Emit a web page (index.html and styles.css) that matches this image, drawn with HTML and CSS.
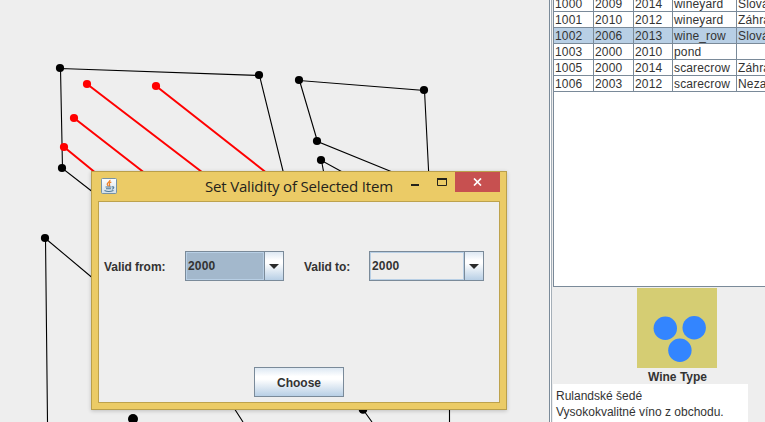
FILE: index.html
```html
<!DOCTYPE html>
<html lang="en">
<head>
<meta charset="utf-8">
<title>Set Validity of Selected Item</title>
<link rel="stylesheet" href="styles.css">
</head>
<body>
<div class="app">
  <main class="map">
    <svg width="549" height="422" viewBox="0 0 549 422">
      <g class="outline">
        <path d="M91.500 191L62.500 168.500L60.500 68.500L259.500 75.500L284 175"/>
        <path d="M396 173.500L317.500 141.500L299.500 80.500L424.500 90.500L428.800 175"/>
        <path d="M324 174L321.500 160.500L346 174"/>
        <path d="M95 280L45.500 238.500L47.500 422"/>
        <path d="M234 408L243 422M363 409.500L372 422M449.500 405V422"/>
      </g>
      <g class="rows">
        <path d="M87 84L204.500 174M156 86L268 174M74 118L146 174M64 147L97 174"/>
      </g>
      <g class="nodes">
        <circle cx="60" cy="68" r="4.100"/><circle cx="259" cy="75" r="4.100"/><circle cx="62" cy="168" r="4.100"/>
        <circle cx="299" cy="80" r="4.100"/><circle cx="424" cy="90" r="4.100"/><circle cx="317" cy="141" r="4.100"/>
        <circle cx="321" cy="160" r="4.100"/><circle cx="45" cy="238" r="4.100"/>
        <circle cx="133" cy="419" r="5"/><circle cx="363" cy="409.500" r="4.300"/>
      </g>
      <g class="selected">
        <circle cx="87" cy="84" r="4.100"/><circle cx="156" cy="86" r="4.100"/><circle cx="74" cy="118" r="4.100"/><circle cx="64" cy="147" r="4.100"/>
      </g>
    </svg>
  </main>
  <aside class="side">
    <div class="list">
      <table class="items">
        <tr><td>1000</td><td>2009</td><td>2014</td><td>wineyard</td><td>Slová</td></tr>
        <tr><td>1001</td><td>2010</td><td>2012</td><td>wineyard</td><td>Záhra</td></tr>
        <tr class="current"><td>1002</td><td>2006</td><td>2013</td><td>wine_row</td><td>Slová</td></tr>
        <tr><td>1003</td><td>2000</td><td>2010</td><td>pond</td><td></td></tr>
        <tr><td>1005</td><td>2000</td><td>2014</td><td>scarecrow</td><td>Záhra</td></tr>
        <tr><td>1006</td><td>2003</td><td>2012</td><td>scarecrow</td><td>Neza</td></tr>
      </table>
    </div>
    <div class="detail">
      <svg class="wine" width="80" height="80" viewBox="0 0 80 80">
        <rect width="80" height="80" fill="#d5cd73"/>
        <g fill="#3385ff"><circle cx="28.300" cy="40.200" r="11.700"/><circle cx="57.200" cy="39.700" r="11.700"/><circle cx="42.900" cy="62.300" r="11.700"/></g>
      </svg>
      <div class="caption">Wine Type</div>
      <div class="note">Rulandské šedé<br>Vysokokvalitné víno z obchodu.</div>
    </div>
  </aside>
</div>

<section class="dialog">
  <header class="titlebar">
    <svg class="java" width="16" height="16" viewBox="0 0 16 16">
      <defs><linearGradient id="tile" x2="0" y2="1"><stop stop-color="#fff"/><stop offset="1" stop-color="#d2dfe8"/></linearGradient></defs>
      <rect x=".5" y=".5" width="15" height="15" rx="1" fill="url(#tile)" stroke="#7792a5"/>
      <path d="M9 1.800C9.500 4 5.700 4.300 6.200 6.300Q6.400 7.200 7.500 8.200M10.300 4.200Q7.500 5 8.400 6.500Q9.200 7.400 8 8.300" fill="none" stroke="#ed7d22" stroke-width="1.200"/>
      <path d="M4.500 9H10.500M5 10.700H10M11 9Q13.500 8.500 12.500 10.200Q12 11 10.800 11.300M3.500 12.500Q7.500 14.500 12.500 12.500" fill="none" stroke="#4d7795" stroke-width="1.100"/>
    </svg>
    <h1>Set Validity of Selected Item</h1>
    <div class="controls">
      <span class="ctl min"><svg width="8" height="2"><rect width="8" height="2" fill="#25231b"/></svg></span>
      <span class="ctl max"><svg width="10" height="8" viewBox="0 0 10 8"><path d="M.5 1V7.500H9.500V1" fill="none" stroke="#25231b"/><path d="M0 1H10" stroke="#25231b" stroke-width="2"/></svg></span>
      <span class="close"><svg width="9" height="8" viewBox="0 0 9 8"><path d="M1 .5L8 7.500M8 .5L1 7.500" stroke="#fff" stroke-width="1.700"/></svg></span>
    </div>
  </header>
  <div class="body">
    <div class="form">
      <span class="label">Valid from:</span>
      <div class="combo focused"><span class="value">2000</span><span class="arrow"><svg width="10" height="5"><path d="M0 0H10L5 5Z" fill="#2b2b2b"/></svg></span></div>
      <span class="label to">Valid to:</span>
      <div class="combo second"><span class="value">2000</span><span class="arrow"><svg width="10" height="5"><path d="M0 0H10L5 5Z" fill="#2b2b2b"/></svg></span></div>
    </div>
    <button class="choose">Choose</button>
  </div>
</section>
</body>
</html>
```
FILE: styles.css
```css
* { box-sizing: border-box; }
body {
  margin: 0;
  width: 765px;
  height: 422px;
  overflow: hidden;
  background: #eee;
  color: #333;
  font: 12px/16px "Liberation Sans", Arial, sans-serif;
}
svg { display: block; }
.app { display: flex; width: 765px; height: 422px; }
.map { width: 549px; flex: none; overflow: hidden; }
.outline { fill: none; stroke: #000; stroke-width: 1.1; }
.rows { stroke: #f00; stroke-width: 2; }
.selected { fill: #f00; }

.side {
  width: 216px;
  height: 422px;
  overflow: hidden;
  border-left: 1px solid #7a8a99;
  box-shadow: inset 1px 0 #fff, inset 2px 0 #a5afb8;
  padding-left: 3px;
}
.list {
  height: 287px;
  overflow: hidden;
  background: #fff;
  border-left: 1px solid #7a8a99;
  border-bottom: 1px solid #7a8a99;
}
.items {
  width: 240px;
  margin-top: -4px;
  table-layout: fixed;
  border-collapse: separate;
  border-spacing: 0;
}
.items td {
  width: 40px;
  height: 16px;
  padding: 1px 0 0 1px;
  line-height: 14px;
  border-right: 1px solid #7a8a99;
  border-bottom: 1px solid #7a8a99;
  white-space: nowrap;
  letter-spacing: .15px;
}
.items td:nth-child(3) { width: 39px; }
.items td:nth-child(4) { width: 64px; }
.items td:nth-child(5) { width: 57px; }
.current { background: #b8cfe5; }

.detail { padding-top: 1px; }
.wine { margin-left: 84px; }
.caption {
  width: 249px;
  height: 16px;
  line-height: 18px;
  text-align: center;
  font-weight: bold;
}
.note {
  width: 195px;
  height: 38px;
  padding: 4px 3px;
  background: #fff;
  white-space: nowrap;
}

.dialog {
  position: absolute;
  left: 91px;
  top: 171px;
  width: 416px;
  height: 239px;
  padding: 0 6px 6px;
  background: #ebcb66;
  border: 1px solid #b99f4b;
  box-shadow: 0 1px 4px rgba(0, 0, 0, .2);
}
.titlebar { display: flex; height: 29px; }
.java { margin: 6px 0 0 3px; flex: none; }
h1 {
  width: 190px;
  margin: 0 0 0 88px;
  font: 15px/29px "Open Sans", sans-serif;
  letter-spacing: -.18px;
  color: #25231b;
  white-space: nowrap;
}
.controls { display: flex; margin-left: auto; height: 20px; }
.ctl { width: 27px; }
.min { padding: 12px 0 0 10px; }
.max { padding: 6px 0 0 9px; }
.close {
  display: flex;
  width: 45px;
  align-items: center;
  justify-content: center;
  background: #c75050;
}
.body {
  height: 202px;
  border: 1px solid #bda24d;
  padding: 49px 5px 0;
  background: #eee;
}
.form { display: flex; align-items: center; height: 30px; font-weight: bold; }
.label { width: 81px; padding-top: 2px; white-space: nowrap; letter-spacing: -.05px; }
.to { width: 65px; margin-left: 20px; }
.combo {
  display: flex;
  width: 99px;
  height: 30px;
  border: 1px solid #7a8a99;
}
.second { width: 115px; }
.value {
  flex: 1;
  padding-left: 1px;
  border: 1px solid #b8cfe5;
  line-height: 26px;
  letter-spacing: .2px;
}
.focused .value { background: #a3b8cc; }
.arrow {
  display: flex;
  width: 19px;
  align-items: center;
  justify-content: center;
  border-left: 1px solid #7a8a99;
}
.arrow, .choose { background: linear-gradient(#dde8f3 0%, #fff 30%, #fff 40%, #b8cfe5 100%); }
.choose {
  display: block;
  width: 90px;
  height: 30px;
  margin: 86px 0 0 150px;
  padding: 2px 0 0;
  border: 1px solid #7a8a99;
  color: #333;
  font: bold 12px/26px "Liberation Sans", Arial, sans-serif;
}
```
